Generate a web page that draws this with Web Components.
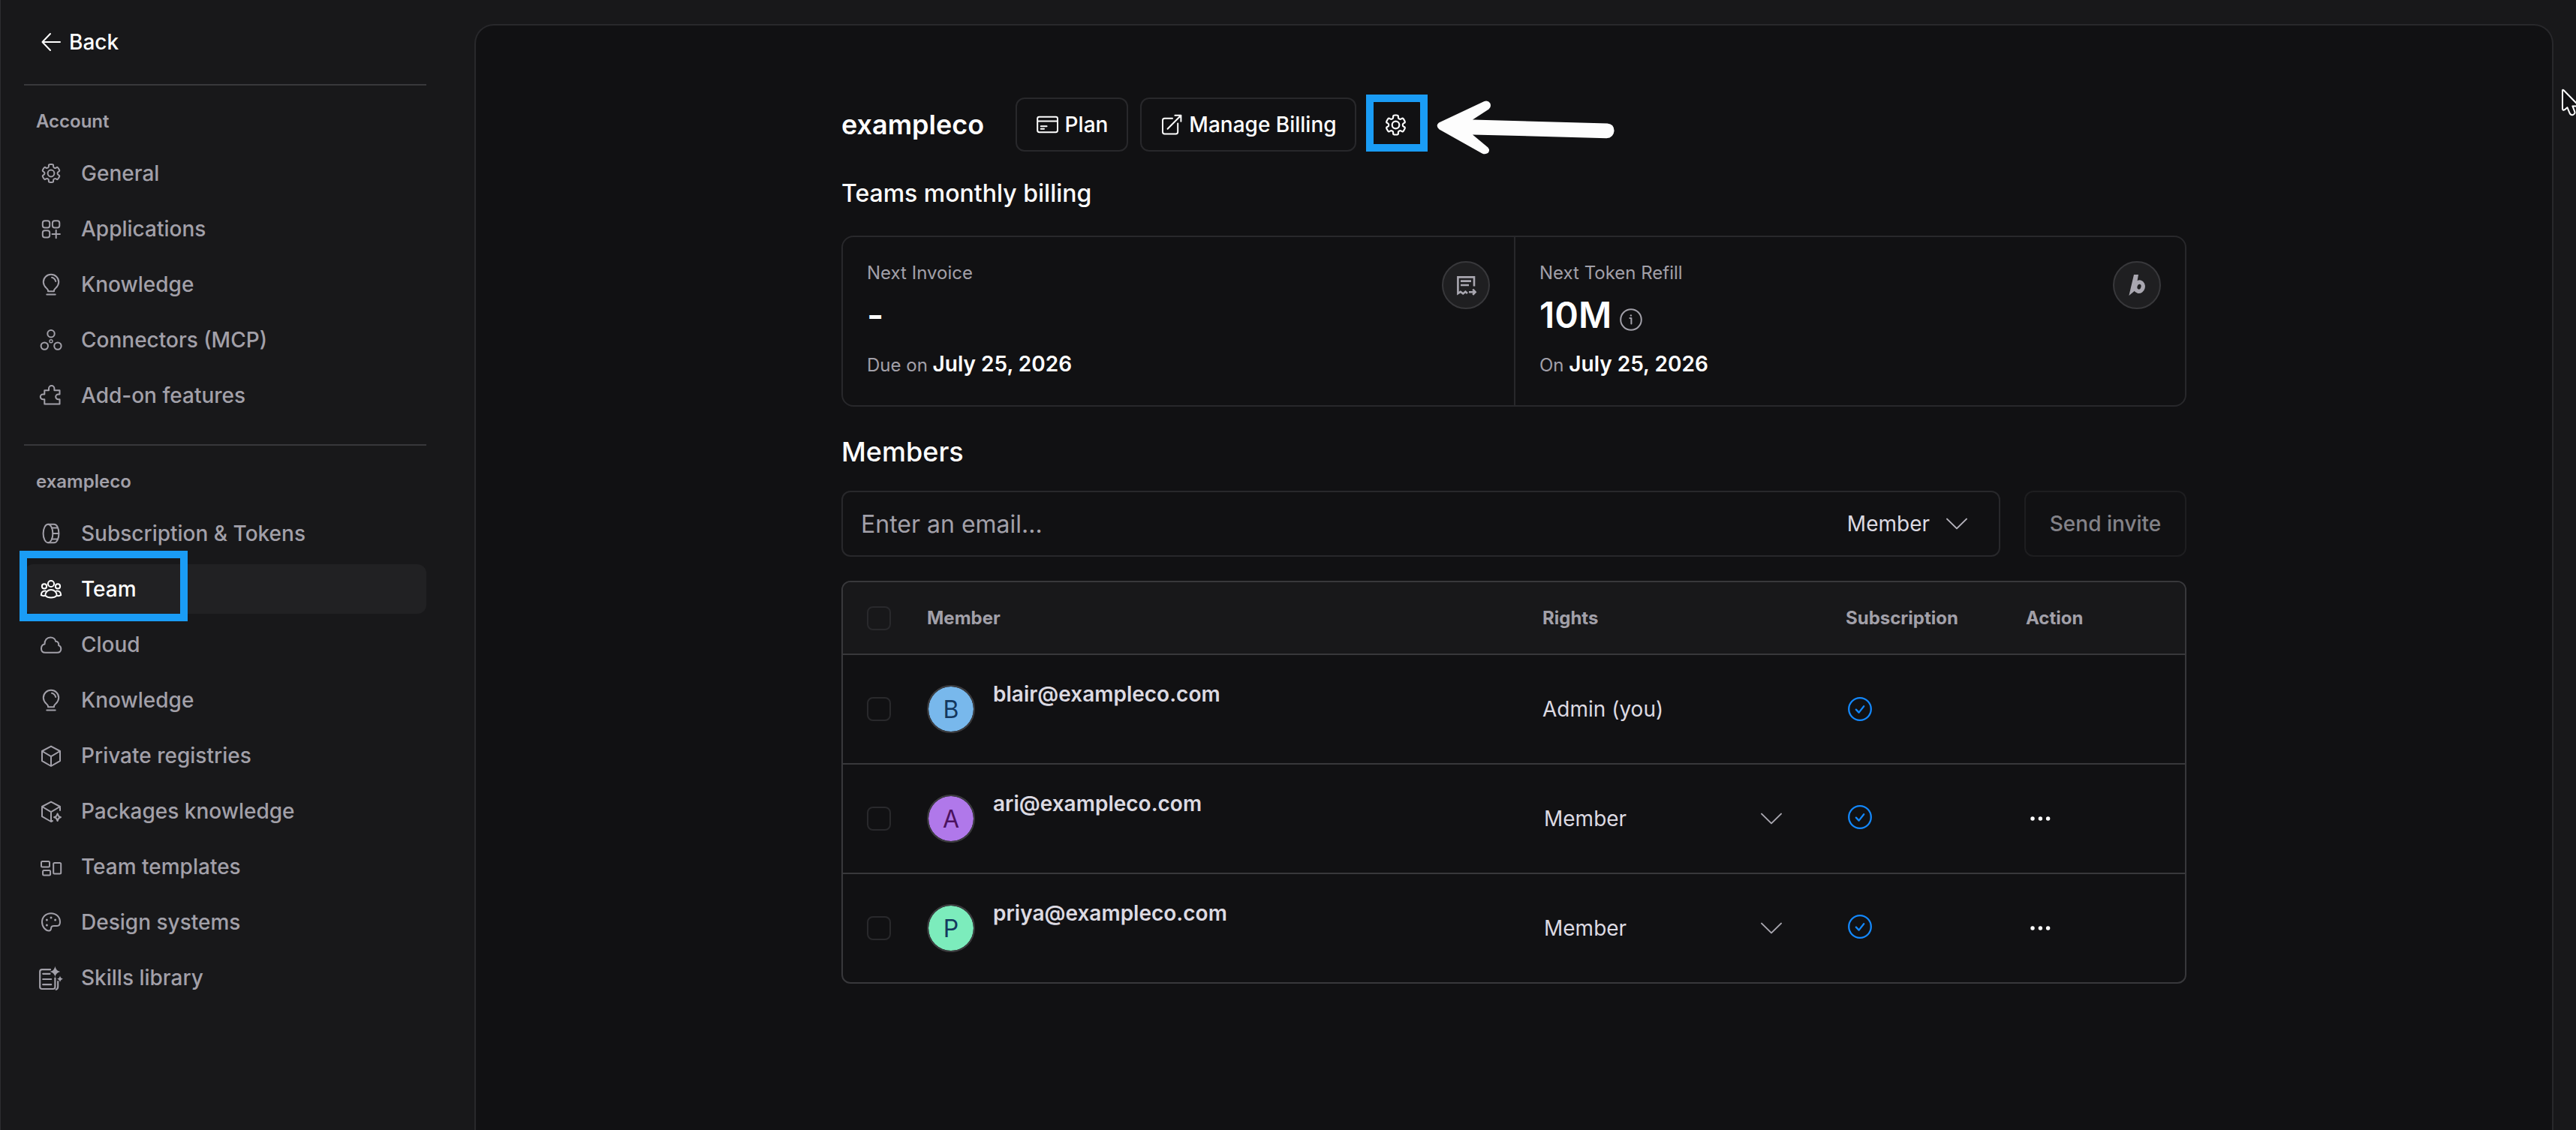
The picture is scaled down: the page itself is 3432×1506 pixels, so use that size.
<!DOCTYPE html>
<html lang="en">
<head>
<meta charset="utf-8">
<title>Team settings</title>
<style>
  html, body { margin: 0; height: 100%; }
  body {
    --bg: #18181a;
    --panel: #111113;
    --line: #28282b;
    --line-strong: #38383b;
    --muted: #a2a0a9;
    --text: #dcdae2;
    --bright: #ffffff;
    --mark: #1a9cf5;
    background: var(--bg);
    color: var(--text);
    font-family: Inter, "Liberation Sans", sans-serif;
    font-size: 28px;
    overflow: hidden;
  }
</style>
</head>
<body>
<settings-app>
  <settings-sidebar slot="sidebar">
    <nav-section label="Account">
      <nav-item icon="gear">General</nav-item>
      <nav-item icon="apps">Applications</nav-item>
      <nav-item icon="bulb">Knowledge</nav-item>
      <nav-item icon="nodes">Connectors (MCP)</nav-item>
      <nav-item icon="puzzle">Add-on features</nav-item>
    </nav-section>
    <nav-section label="exampleco">
      <nav-item icon="coin">Subscription &amp; Tokens</nav-item>
      <nav-item icon="team" active>Team</nav-item>
      <nav-item icon="cloud">Cloud</nav-item>
      <nav-item icon="bulb">Knowledge</nav-item>
      <nav-item icon="cube">Private registries</nav-item>
      <nav-item icon="cube-spark">Packages knowledge</nav-item>
      <nav-item icon="layout">Team templates</nav-item>
      <nav-item icon="palette">Design systems</nav-item>
      <nav-item icon="skills">Skills library</nav-item>
    </nav-section>
  </settings-sidebar>

  <team-page name="exampleco">
    <stat-cell slot="stats" label="Next Invoice" value="-" prefix="Due on" date="July 25, 2026" icon="receipt"></stat-cell>
    <stat-cell slot="stats" label="Next Token Refill" value="10M" prefix="On" date="July 25, 2026" icon="logo" info></stat-cell>
    <invite-form slot="members"></invite-form>
    <member-table slot="members">
      <member-row email="blair@exampleco.com" color="#78b8ec" ink="#14385f" owner>Admin (you)</member-row>
      <member-row email="ari@exampleco.com" color="#b078ea" ink="#4c1260">Member</member-row>
      <member-row email="priya@exampleco.com" color="#7cecbc" ink="#14385f">Member</member-row>
    </member-table>
  </team-page>
</settings-app>

<script>
// six-tooth gear with softened corners
function gearPath() {
  const pts = [];
  for (let k = 0; k < 6; k++) {
    [[-20, 8.7], [-15, 12.3], [15, 12.3], [20, 8.7]].forEach(([a, r]) => {
      const t = (k * 60 + a - 90) * Math.PI / 180;
      pts.push([16 + r * Math.cos(t), 16 + r * Math.sin(t)]);
    });
  }
  const mix = (a, b, f) => [(a[0] + (b[0] - a[0]) * f).toFixed(2), (a[1] + (b[1] - a[1]) * f).toFixed(2)].join(' ');
  return pts.map((p, i) => {
    const prev = pts[(i + pts.length - 1) % pts.length];
    const next = pts[(i + 1) % pts.length];
    return `${i ? 'L' : 'M'}${mix(p, prev, 0.38)}Q${p[0].toFixed(2)} ${p[1].toFixed(2)} ${mix(p, next, 0.38)}`;
  }).join('') + 'Z';
}

// every icon is drawn on a 32 x 32 grid
const ICONS = {
  back: '<path d="M28 16H4.5M15 5L4.5 16 15 27"/>',
  gear: `<path d="${gearPath()}"/><circle cx="16" cy="16" r="4.4"/>`,
  apps: '<rect x="4.8" y="5.2" width="9.4" height="9.4" rx="3"/><rect x="17.9" y="5.2" width="9.4" height="9.4" rx="3"/><rect x="4.8" y="18.2" width="9.4" height="9.4" rx="3"/><path d="M22.7 17.8V28.2M17.5 23H27.9"/>',
  bulb: '<path d="M12 25.3V23.8C10.8 20.8 5.8 19 5.8 12.9a10.2 10.2 0 0 1 20.4 0C26.2 19 21.2 20.8 20 23.8V25.3ZM10.3 29.4H21.7M17 6.8Q21 7.6 22.2 12"/>',
  nodes: '<circle cx="16" cy="7.7" r="4.7"/><circle cx="7.3" cy="24.1" r="4.7"/><circle cx="24.9" cy="24.1" r="4.7"/><circle cx="16" cy="17.7" r="2" stroke-width="1.4"/>',
  puzzle: '<path d="M7.3 9.2H13V6.8a3.7 3.7 0 0 1 7.4 0V9.2H27.5V14.4H25.6a3.4 3.4 0 0 0 0 6.8H27.5V27.6H7.3V21.2H5.2a3.4 3.4 0 0 1 0-6.8H7.3Z"/>',
  coin: '<ellipse cx="12" cy="16" rx="6.4" ry="12.2"/><path d="M12 3.8H20C24 3.8 26.4 9.4 26.4 16S24 28.2 20 28.2H12M17 8.5H24.4M18.4 16H26.4M17 23.5H24.4"/>',
  team: '<circle cx="16" cy="9" r="4.1"/><circle cx="7" cy="12.4" r="3.1"/><circle cx="25" cy="12.4" r="3.1"/><path d="M8.3 24.6C8.3 14.5 23.7 14.5 23.7 24.6 20 28.6 12 28.6 8.3 24.6ZM8.6 18.6C4.6 18.4 2.8 20.7 2.8 24.2 4.5 25.2 6.5 25.4 8.3 24.8M23.4 18.6C27.4 18.4 29.2 20.7 29.2 24.2 27.5 25.2 25.5 25.4 23.7 24.8"/>',
  cloud: '<path d="M8.5 26.8C4.8 26.8 3 24.4 3 21.4 3 18.2 5 16.1 7.5 15.6 7.2 10 10.8 6.4 15.2 6.4 19 6.4 21.8 8.8 22.2 11.8 25.2 11.9 26.7 14.2 26 17.1 28.3 17.8 29.3 19.8 29.3 21.8 29.3 24.9 27.3 26.8 24 26.8Z"/>',
  cube: '<path d="M16 3.6L28 10V23.2L16 30 4 23.2V10ZM4 10L16 17.2 28 10M16 17.2V30"/>',
  'cube-spark': '<path d="M18 29L16 30 4 23.2V10L16 3.6 28 10V15M4 10L16 17.2 28 10M16 17.2V30M24.6 19.3L26.2 22.9 29 24.2 26.2 25.5 24.6 29 23 25.5 20 24.2 23 22.9Z"/>',
  layout: '<rect x="3" y="9" width="11" height="7.6" rx="1.5"/><rect x="5.1" y="21" width="10" height="6.4" rx="1.5"/><rect x="19.2" y="11" width="10" height="14.6" rx="1.5"/>',
  palette: '<path d="M16 4.2C9 4.2 4 9.2 4 15.8 4 22.8 9.2 27.4 13.2 27.4 16.6 27.4 15.6 25 16.4 22.7 17 21.2 18 21 20 21H24C27 21 28 18.4 28 15.8 28 9.2 23 4.2 16 4.2Z"/><g fill="currentColor" stroke="none"><circle cx="16" cy="10" r="1.5"/><circle cx="21.6" cy="13" r="1.5"/><circle cx="10.4" cy="13" r="1.5"/><circle cx="10.4" cy="20" r="1.5"/></g>',
  skills: '<path stroke-width="2.2" d="M15 5.2H4Q1.2 5.2 1.2 8V28.3Q1.2 31 4 31H18.8Q21.4 31 21.4 28.3V16.5M25.2 21V27.5Q25.2 31 22.8 31.8M5.2 10.8H14.5M5.2 18H16.2M5.2 25.2H16.2"/><path fill="currentColor" stroke="none" d="M21.4 .8Q22.4 6.8 28.2 8 22.4 9.2 21.4 15.4 20.4 9.2 14.6 8 20.4 6.8 21.4 .8ZM28 13.6Q28.6 17 32 17.7 28.6 18.4 28 22 27.4 18.4 24 17.7 27.4 17 28 13.6Z"/>',
  card: '<path d="M4.6 5.7H26.6Q29 5.7 29 8.1V23.8Q29 26.2 26.6 26.2H4.6Q2.2 26.2 2.2 23.8V8.1Q2.2 5.7 4.6 5.7ZM2.2 11.6H29M6.8 18.3H14.6M6.8 21.7H11"/>',
  external: '<path d="M17 7.8H6.6Q4 7.8 4 10.4V25.8Q4 28.4 6.6 28.4H21.6Q24.2 28.4 24.2 25.8V14.6M20.4 3.8H28.4V11.8M28.2 4L10.6 21.8"/>',
  info: '<circle cx="16" cy="16" r="13.8"/><path d="M14.4 14H16.4V21.6"/><circle cx="15.9" cy="10.4" r="1.2" fill="currentColor" stroke="none"/>',
  receipt: '<path stroke-width="2.6" stroke-linejoin="miter" stroke-linecap="butt" d="M27 17.5V5.4H5.4V27L8.8 24.8 12.2 27.4 15.4 24.8 18 27M9 10.6H23M9 16H20M20 25.2H28M25.2 21.6L28.6 25.2 25.2 28.8"/>',
  logo: '<ellipse cx="19" cy="18.2" rx="5.2" ry="6.2" stroke-width="5.4" transform="rotate(14 19 18.2)"/><path fill="currentColor" stroke="none" d="M12 2H18L14.4 22.6 11.4 25 5.4 30Z"/>',
  chevron: '<path d="M3 9.6L16 22.4 29 9.6"/>',
  check: '<circle cx="16" cy="16" r="14.8"/><path d="M10.8 16.6L14.6 20.6 21.2 12.2"/>',
  dots: '<g fill="currentColor" stroke="none"><circle cx="5" cy="16" r="2.7"/><circle cx="15.4" cy="16" r="2.7"/><circle cx="25.6" cy="16" r="2.7"/></g>',
};

// small base class: fills an open shadow root from a string of markup
class BaseElement extends HTMLElement {
  connectedCallback() {
    if (this.shadowRoot) return;
    const template = document.createElement('template');
    template.innerHTML = this.render();
    this.attachShadow({ mode: 'open' }).appendChild(template.content.cloneNode(true));
  }

  attr(name) {
    return this.getAttribute(name) || '';
  }
}

class UiIcon extends BaseElement {
  render() {
    return `
      <style>
        :host { display: block; flex: none; width: var(--size, 32px); height: var(--size, 32px); }
        svg { display: block; width: 100%; height: 100%; overflow: visible; }
      </style>
      <svg viewBox="0 0 32 32" fill="none" stroke="currentColor" stroke-width="${this.attr('stroke') || 2}"
        stroke-linecap="round" stroke-linejoin="round">${ICONS[this.attr('name')]}</svg>
    `;
  }
}

class SettingsApp extends BaseElement {
  render() {
    return `
      <style>
        :host {
          display: grid;
          grid-template-columns: 631px 1fr;
          height: 100vh;
          border-left: 1px solid #2d2d30;
          box-sizing: border-box;
          position: relative;
        }
        main {
          margin: 32px 30px 0 0;
          padding-top: 96px;
          background: var(--panel);
          border: 2px solid var(--line);
          border-bottom: 0;
          border-radius: 26px 26px 0 0;
        }
        .cursor {
          position: absolute;
          right: -8px;
          top: 117px;
          width: 28px;
          height: 40px;
        }
      </style>
      <slot name="sidebar"></slot>
      <main><slot></slot></main>
      <svg class="cursor" viewBox="0 0 28 40" fill="#111113" stroke="#fff" stroke-width="2" stroke-linejoin="round">
        <path d="M2 3.5V27.6Q2.2 30.6 5 29.2L8.4 26.2 11.4 33.4Q12.6 36.8 16 36 19.4 34.6 18.2 31.6L15.4 24.4H20Q23.4 24 21.4 21.4L3.6 3.2Q2.2 2 2 3.5Z"/>
      </svg>
    `;
  }
}

class SettingsSidebar extends BaseElement {
  render() {
    return `
      <style>
        :host { display: block; padding: 32px 64px 0 31px; }
        .back {
          display: flex;
          align-items: center;
          gap: 8px;
          height: 48px;
          padding-left: 20px;
          margin-bottom: 32px;
          color: var(--bright);
          font-weight: 500;
        }
      </style>
      <div class="back"><ui-icon name="back"></ui-icon><span>Back</span></div>
      <slot></slot>
    `;
  }
}

class NavSection extends BaseElement {
  render() {
    return `
      <style>
        :host {
          display: block;
          border-top: 2px solid var(--line-strong);
          padding: 32px 0;
        }
        h2 {
          margin: 0 0 20px;
          padding-left: 16px;
          font-size: 24px;
          line-height: 32px;
          font-weight: 600;
          color: var(--muted);
        }
        nav { display: flex; flex-direction: column; gap: 8px; }
      </style>
      <h2>${this.attr('label')}</h2>
      <nav><slot></slot></nav>
    `;
  }
}

class NavItem extends BaseElement {
  render() {
    return `
      <style>
        :host {
          display: flex;
          align-items: center;
          gap: 24px;
          height: 66px;
          padding-left: 20px;
          border-radius: 12px;
          color: var(--muted);
          font-weight: 500;
          position: relative;
        }
        :host([active]) { background: #212123; color: var(--bright); }
        .mark {
          position: absolute;
          left: -6px;
          top: -18px;
          width: 204px;
          height: 74px;
          border: 10px solid var(--mark);
        }
      </style>
      <ui-icon name="${this.attr('icon')}"></ui-icon>
      <span><slot></slot></span>
      ${this.hasAttribute('active') ? '<div class="mark"></div>' : ''}
    `;
  }
}

class ActionButton extends BaseElement {
  render() {
    return `
      <style>
        :host {
          display: flex;
          align-items: center;
          justify-content: center;
          gap: 7px;
          height: 72px;
          border: 2px solid var(--line);
          border-radius: 12px;
          box-sizing: border-box;
          color: var(--bright);
          font-weight: 500;
        }
      </style>
      <ui-icon name="${this.attr('icon')}" stroke="2"></ui-icon>
      <slot></slot>
    `;
  }
}

class TeamPage extends BaseElement {
  render() {
    return `
      <style>
        :host { display: block; width: 1792px; margin: 0 auto; }
        header { display: flex; gap: 16px; }
        h1 {
          width: 216px;
          margin: 0;
          font-size: 36px;
          line-height: 72px;
          font-weight: 600;
          color: var(--bright);
        }
        h2 { margin: 32px 0; font-size: 32px; line-height: 48px; font-weight: 500; color: var(--bright); }
        h3 { margin: 32px 0 24px; font-size: 36px; line-height: 56px; font-weight: 500; color: var(--bright); }
        .plan { width: 150px; }
        .billing { width: 288px; }
        .settings { position: relative; width: 72px; }
        .settings action-button { --size: 35px; gap: 0; }
        .mark {
          position: absolute;
          left: -3px;
          top: -4px;
          width: 62px;
          height: 56px;
          border: 10px solid var(--mark);
        }
        .arrow { position: absolute; left: 91px; top: 3px; width: 238px; height: 74px; }
        .stats {
          display: grid;
          grid-template-columns: 1fr 1fr;
          height: 224px;
          border: 2px solid var(--line);
          border-radius: 16px;
        }
      </style>
      <header>
        <h1>${this.attr('name')}</h1>
        <action-button class="plan" icon="card">Plan</action-button>
        <action-button class="billing" icon="external">Manage Billing</action-button>
        <div class="settings">
          <action-button icon="gear"></action-button>
          <div class="mark"></div>
          <svg class="arrow" viewBox="0 0 238 74" fill="#fdfdfd">
            <path d="M3 30.5L63.5 2Q68.5 .3 71.3 4.6 73.3 9.2 69.6 12.6L48 26.6 227.5 31.4Q236.4 32.2 236.6 41.2 235.8 50.6 226.4 51.2L48 46.4 68.4 63.4Q71.6 67.4 68.6 70.8 65 73.4 60.6 71.4L3.6 39.4Q-2 34.4 3 30.5Z"/>
          </svg>
        </div>
      </header>
      <h2>Teams monthly billing</h2>
      <section class="stats"><slot name="stats"></slot></section>
      <h3>Members</h3>
      <slot name="members"></slot>
    `;
  }
}

class StatCell extends BaseElement {
  render() {
    return `
      <style>
        :host {
          display: flex;
          justify-content: space-between;
          align-items: flex-start;
          padding: 32px;
        }
        :host(:nth-of-type(n + 2)) { border-left: 2px solid var(--line); }
        .label { font-size: 24px; line-height: 32px; color: var(--muted); }
        .value {
          display: flex;
          align-items: center;
          gap: 10px;
          margin: 8px 0 16px;
          font-size: 48px;
          line-height: 64px;
          font-weight: 600;
          color: var(--bright);
        }
        .value ui-icon { color: var(--muted); margin-top: 12px; }
        .when { line-height: 34px; font-size: 24px; color: var(--muted); }
        b { font-size: 28px; font-weight: 600; color: var(--bright); }
        .badge {
          display: grid;
          place-items: center;
          width: 60px;
          height: 60px;
          border: 2px solid var(--line-strong);
          border-radius: 50%;
          background: #1f1f21;
          color: #a9a7b0;
        }
      </style>
      <div>
        <div class="label">${this.attr('label')}</div>
        <div class="value"><span>${this.attr('value')}</span>${this.hasAttribute('info') ? '<ui-icon name="info"></ui-icon>' : ''}</div>
        <div class="when">${this.attr('prefix')} <b>${this.attr('date')}</b></div>
      </div>
      <div class="badge"><ui-icon name="${this.attr('icon')}"></ui-icon></div>
    `;
  }
}

class InviteForm extends BaseElement {
  render() {
    return `
      <style>
        :host { display: grid; grid-template-columns: 1fr 216px; gap: 32px; margin-bottom: 32px; }
        .field, .send {
          display: flex;
          align-items: center;
          height: 84px;
          border: 2px solid var(--line);
          border-radius: 12px;
        }
        .field { padding: 0 40px 0 24px; }
        .hint { flex: 1; font-size: 32px; color: var(--muted); }
        .role { margin-right: 20px; }
        ui-icon { color: #b6b4bd; }
        .send { justify-content: center; border-color: #1e1e20; color: #838288; font-weight: 500; }
      </style>
      <div class="field">
        <span class="hint">Enter an email...</span>
        <span class="role">Member</span>
        <ui-icon name="chevron"></ui-icon>
      </div>
      <div class="send">Send invite</div>
    `;
  }
}

const TABLE_GRID = `
  display: grid;
  grid-template-columns: 80px 820px 404px 240px 1fr;
  padding-left: 32px;
  align-items: center;
`;

const CHECKBOX = `
  width: 28px;
  height: 28px;
  border: 2px solid #29292c;
  border-radius: 8px;
`;

class MemberTable extends BaseElement {
  render() {
    return `
      <style>
        :host {
          display: block;
          border: 2px solid var(--line-strong);
          border-radius: 12px;
          overflow: hidden;
        }
        .head {
          ${TABLE_GRID}
          height: 95px;
          background: #18181a;
          font-size: 24px;
          font-weight: 700;
          color: var(--muted);
        }
        .box { ${CHECKBOX} }
      </style>
      <div class="head">
        <div class="box"></div>
        <span>Member</span>
        <span>Rights</span>
        <span>Subscription</span>
        <span>Action</span>
      </div>
      <slot></slot>
    `;
  }
}

class MemberRow extends BaseElement {
  render() {
    const owner = this.hasAttribute('owner');
    const email = this.attr('email');
    return `
      <style>
        :host {
          ${TABLE_GRID}
          height: 144px;
          border-top: 2px solid var(--line-strong);
        }
        .box { ${CHECKBOX} }
        .who { display: flex; gap: 24px; }
        .avatar {
          display: grid;
          place-items: center;
          width: 60px;
          height: 60px;
          border: 2px solid #3c3c3f;
          border-radius: 50%;
          background: ${this.attr('color')};
          background-clip: padding-box;
          color: ${this.attr('ink')};
          font-size: 32px;
        }
        .email { font-weight: 600; line-height: 25px; }
        .select { display: flex; justify-content: space-between; width: 319px; padding-left: 2px; align-items: center; }
        .select ui-icon { color: #a9a7b0; }
        .check { color: #1488fc; margin-left: 3px; }
        :host(:not([owner])) .check { margin-top: -4px; }
        .dots { color: var(--bright); margin-left: 4px; }
      </style>
      <div class="box"></div>
      <div class="who">
        <div class="avatar">${email[0].toUpperCase()}</div>
        <span class="email">${email}</span>
      </div>
      ${owner ? '<div><slot></slot></div>' : '<div class="select"><span><slot></slot></span><ui-icon name="chevron"></ui-icon></div>'}
      <ui-icon class="check" name="check" stroke="2.3"></ui-icon>
      ${owner ? '' : '<ui-icon class="dots" name="dots"></ui-icon>'}
    `;
  }
}

customElements.define('ui-icon', UiIcon);
customElements.define('settings-app', SettingsApp);
customElements.define('settings-sidebar', SettingsSidebar);
customElements.define('nav-section', NavSection);
customElements.define('nav-item', NavItem);
customElements.define('action-button', ActionButton);
customElements.define('team-page', TeamPage);
customElements.define('stat-cell', StatCell);
customElements.define('invite-form', InviteForm);
customElements.define('member-table', MemberTable);
customElements.define('member-row', MemberRow);
</script>
</body>
</html>
